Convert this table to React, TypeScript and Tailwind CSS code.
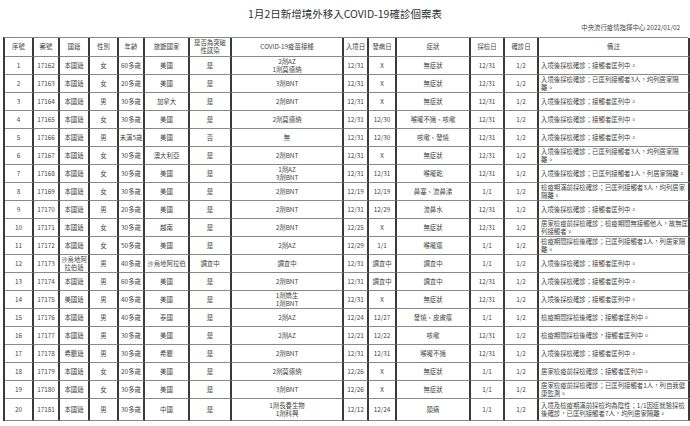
import React from "react";

const headers = [
  "序號",
  "案號",
  "國籍",
  "性別",
  "年齡",
  "旅遊國家",
  "是否為突破性感染",
  "COVID-19疫苗接種",
  "入境日",
  "發病日",
  "症狀",
  "採檢日",
  "確診日",
  "備註",
];

const rows: string[][] = [
  ["1", "17162", "本國籍", "女", "60多歲", "美國", "是", "2劑AZ\n1劑莫德納", "12/31", "X", "無症狀", "12/31", "1/2", "入境後採檢確診；接觸者匡列中。"],
  ["2", "17163", "本國籍", "女", "20多歲", "美國", "是", "3劑BNT", "12/31", "X", "無症狀", "12/31", "1/2", "入境後採檢確診；已匡列接觸者3人，均列居家隔離。"],
  ["3", "17164", "本國籍", "男", "30多歲", "加拿大", "是", "2劑BNT", "12/31", "X", "無症狀", "12/31", "1/2", "入境後採檢確診；接觸者匡列中。"],
  ["4", "17165", "本國籍", "女", "30多歲", "美國", "是", "2劑莫德納", "12/31", "12/30", "喉嚨不適、咳嗽", "12/31", "1/2", "入境後採檢確診；接觸者匡列中。"],
  ["5", "17166", "本國籍", "男", "未滿5歲", "美國", "否", "無", "12/31", "12/30", "咳嗽、發燒", "12/31", "1/2", "入境後採檢確診；接觸者匡列中。"],
  ["6", "17167", "本國籍", "女", "30多歲", "澳大利亞", "是", "2劑BNT", "12/31", "X", "無症狀", "12/31", "1/2", "入境後採檢確診；已匡列接觸者3人，均列居家隔離。"],
  ["7", "17168", "本國籍", "女", "30多歲", "美國", "是", "1劑AZ\n3劑BNT", "12/31", "12/31", "喉嚨乾", "12/31", "1/2", "入境後採檢確診；已匡列接觸者1人，列居家隔離。"],
  ["8", "17169", "本國籍", "女", "30多歲", "美國", "是", "2劑BNT", "12/19", "12/19", "鼻塞、流鼻涕", "1/1", "1/2", "檢疫期滿前採檢確診；已匡列接觸者3人，均列居家隔離。"],
  ["9", "17170", "本國籍", "男", "20多歲", "美國", "是", "2劑BNT", "12/31", "12/29", "流鼻水", "12/31", "1/2", "入境後採檢確診；接觸者匡列中。"],
  ["10", "17171", "本國籍", "女", "30多歲", "越南", "是", "2劑BNT", "12/25", "X", "無症狀", "12/31", "1/2", "居家檢疫前採檢確診；檢疫期間無接觸他人，故無匡列接觸者。"],
  ["11", "17172", "本國籍", "女", "50多歲", "美國", "是", "2劑AZ", "12/29", "1/1", "喉嚨癢", "1/1", "1/2", "檢疫期間採檢後確診；已匡列接觸者1人，列居家隔離。"],
  ["12", "17173", "沙烏地阿拉伯籍", "男", "40多歲", "沙烏地阿拉伯", "調查中", "調查中", "12/31", "調查中", "調查中", "1/1", "1/2", "入境後採檢確診；接觸者匡列中。"],
  ["13", "17174", "本國籍", "男", "60多歲", "美國", "是", "2劑BNT", "12/31", "調查中", "調查中", "12/31", "1/2", "入境後採檢確診；接觸者匡列中。"],
  ["14", "17175", "美國籍", "男", "40多歲", "美國", "是", "1劑嬌生\n1劑BNT", "12/31", "X", "無症狀", "12/31", "1/2", "入境後採檢確診；接觸者匡列中。"],
  ["15", "17176", "本國籍", "男", "40多歲", "泰國", "是", "2劑AZ", "12/24", "12/27", "發燒、皮膚癢", "1/1", "1/2", "檢疫期間採檢後確診；接觸者匡列中。"],
  ["16", "17177", "本國籍", "男", "30多歲", "美國", "是", "2劑AZ", "12/21", "12/22", "咳嗽", "12/31", "1/2", "檢疫期間採檢後確診，接觸者匡列中。"],
  ["17", "17178", "希臘籍", "男", "30多歲", "希臘", "是", "2劑BNT", "12/31", "12/31", "喉嚨不適", "12/31", "1/2", "入境後採檢確診；接觸者匡列中。"],
  ["18", "17179", "本國籍", "女", "20多歲", "美國", "是", "2劑莫德納", "12/26", "X", "無症狀", "1/1", "1/2", "居家檢疫前採檢確診；接觸者匡列中。"],
  ["19", "17180", "本國籍", "女", "30多歲", "美國", "是", "3劑BNT", "12/26", "X", "無症狀", "1/1", "1/2", "居家檢疫前採檢確診；已匡列接觸者1人，列自我健康監測。"],
  ["20", "17181", "本國籍", "男", "30多歲", "中國", "是", "1劑長春生物\n1劑科興", "12/12", "12/24", "頭痛", "1/1", "1/2", "入境及檢疫期滿前採檢均為陰性；1/1因症就醫採檢後確診，已匡列接觸者7人，均列居家隔離。"],
];

function Cell({ text, last }: { text: string; last: boolean }) {
  return (
    <div
      className={
        last
          ? "flex items-center justify-start text-left pl-[2px] pr-0 border-r-2 border-r-[#3a3a3a] border-b border-b-[#8a8a8a] whitespace-pre-line leading-[8px] overflow-hidden"
          : "flex items-center justify-center text-center px-0 border-r-2 border-r-[#3a3a3a] border-b border-b-[#8a8a8a] whitespace-pre-line leading-[8px] overflow-hidden"
      }
    >
      <span>{text}</span>
    </div>
  );
}

export default function App() {
  return (
    <div
      className="w-[690px] h-[426px] bg-white overflow-hidden text-[#444] pt-[7px]"
      style={{ fontFamily: '"Noto Sans CJK TC", "Noto Sans", sans-serif' }}
    >
      <div className="text-center text-[10.5px] leading-[14px] text-[#333]">
        1月2日新增境外移入COVID-19確診個案表
      </div>
      <div className="mt-[3px] pr-[10px] text-right text-[6.4px] leading-[8px] text-[#444]">
        中央流行疫情指揮中心 2022/01/02
      </div>
      <div className="mt-[5px] ml-[3px] w-[685px] grid grid-cols-[29px_26px_30px_29px_26px_45px_42px_112px_25px_28px_74px_34px_34px_151px] grid-rows-[19px_repeat(19,18px)_22px] border-l-2 border-l-[#3a3a3a] border-t border-t-[#8a8a8a] text-[6.4px]">
        {headers.map((h, i) => (
          <div
            key={"h" + i}
            className="flex items-center justify-center text-center px-[1px] border-r-2 border-r-[#3a3a3a] border-b border-b-[#8a8a8a] leading-[8px] overflow-hidden"
          >
            <span>{h}</span>
          </div>
        ))}
        {rows.map((r, ri) =>
          r.map((c, ci) => <Cell key={ri + "-" + ci} text={c} last={ci === 13} />)
        )}
      </div>
    </div>
  );
}
